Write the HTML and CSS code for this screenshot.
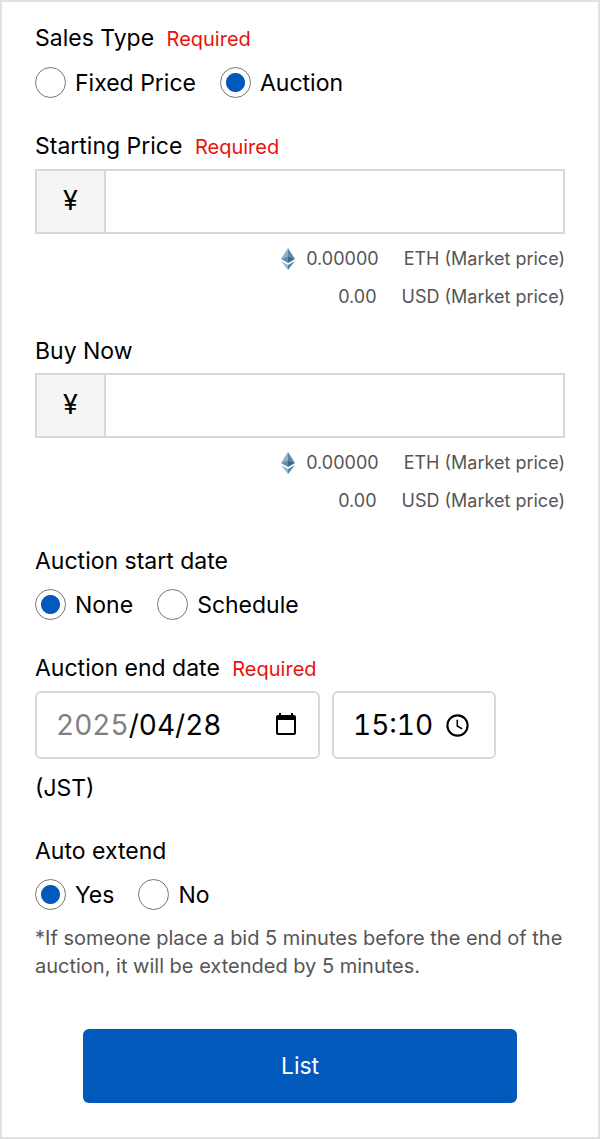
FILE: index.html
```html
<!DOCTYPE html>
<html lang="en">
  <head>
    <meta charset="utf-8" />
    <meta name="viewport" content="width=device-width, initial-scale=1.0" />
    <title>List Item</title>
    <link rel="stylesheet" href="styles.css">
  </head>
  <body>
    <svg class="sprite" aria-hidden="true">
      <symbol id="eth" viewBox="0 0 14 22">
        <path d="M7 0 L0 11 L7 8 Z" fill="#8fb0c6" />
        <path d="M7 0 L14 11 L7 8 Z" fill="#5c88a8" />
        <path d="M0 11 L7 8 V15 Z" fill="#5f8fb0" />
        <path d="M14 11 L7 8 V15 Z" fill="#38688a" />
        <path d="M0 13 L7 17 V22 Z" fill="#94b6cc" />
        <path d="M14 13 L7 17 V22 Z" fill="#5283a4" />
      </symbol>
    </svg>

    <form class="container">
      <fieldset class="section">
        <legend class="section-title">Sales Type <span class="required">Required</span></legend>
        <div class="options">
          <label class="option"><input type="radio" class="radio" name="sales-type">Fixed Price</label>
          <label class="option"><input type="radio" class="radio" name="sales-type" checked>Auction</label>
        </div>
      </fieldset>

      <div class="section section-price">
        <label class="section-title" for="starting-price">Starting Price <span class="required">Required</span></label>
        <div class="price-field">
          <span class="currency">¥</span>
          <input type="text" class="price-input" id="starting-price" inputmode="numeric">
        </div>
        <div class="rates">
          <div class="rate">
            <svg class="eth-icon" aria-hidden="true"><use href="#eth" /></svg>
            <span class="rate-value">0.00000</span>
            <span>ETH (Market price)</span>
          </div>
          <div class="rate">
            <span class="rate-value">0.00</span>
            <span>USD (Market price)</span>
          </div>
        </div>
      </div>

      <div class="section section-buy">
        <label class="section-title" for="buy-now">Buy Now</label>
        <div class="price-field">
          <span class="currency">¥</span>
          <input type="text" class="price-input" id="buy-now" inputmode="numeric">
        </div>
        <div class="rates">
          <div class="rate">
            <svg class="eth-icon" aria-hidden="true"><use href="#eth" /></svg>
            <span class="rate-value">0.00000</span>
            <span>ETH (Market price)</span>
          </div>
          <div class="rate">
            <span class="rate-value">0.00</span>
            <span>USD (Market price)</span>
          </div>
        </div>
      </div>

      <fieldset class="section">
        <legend class="section-title">Auction start date</legend>
        <div class="options">
          <label class="option"><input type="radio" class="radio" name="start-date" checked>None</label>
          <label class="option"><input type="radio" class="radio" name="start-date">Schedule</label>
        </div>
      </fieldset>

      <div class="section">
        <label class="section-title" for="end-date">Auction end date <span class="required">Required</span></label>
        <div class="date-row">
          <input type="date" class="date-input" id="end-date" value="2025-04-28">
          <div class="time-field">
            <input type="text" class="time-input" value="15:10" aria-label="Auction end time">
            <svg class="clock-icon" viewBox="0 0 24 24" aria-hidden="true">
              <circle cx="12" cy="12" r="9.7" />
              <path d="M11.8 6.5 V12.5 L16.5 15.2" />
            </svg>
          </div>
        </div>
        <div class="timezone">(JST)</div>
      </div>

      <fieldset class="section section-extend">
        <legend class="section-title">Auto extend</legend>
        <div class="options">
          <label class="option"><input type="radio" class="radio" name="extend" checked>Yes</label>
          <label class="option"><input type="radio" class="radio" name="extend">No</label>
        </div>
        <p class="note">*If someone place a bid 5 minutes before the end of the auction, it will be extended by 5 minutes.</p>
      </fieldset>

      <button type="submit" class="button">List</button>
    </form>
  </body>
</html>
```
FILE: styles.css
```css
* {
  box-sizing: border-box;
}

body {
  font-family: Inter, "Liberation Sans", sans-serif;
  font-size: 23px;
  line-height: 30px;
  color: #000000;
  background-color: #ffffff;
  margin: 0;
}

input,
button {
  font: inherit;
  color: inherit;
}

.sprite {
  display: none;
}

.container {
  display: flex;
  flex-direction: column;
  min-height: 100vh;
  padding: 21px 33px 33px;
  border: 2px solid #e2e2e2;
}

.section {
  min-width: 0;
  margin: 0 0 33px;
  padding: 0;
  border: none;
}

.section-price {
  margin-bottom: 20px;
}

.section-buy {
  margin-bottom: 26px;
}

.section-title {
  display: block;
  padding: 0;
}

.required {
  margin-left: 6px;
  font-size: 20px;
  color: #e8130c;
}

.options {
  display: flex;
  gap: 24px;
  margin-top: 13px;
}

.option {
  display: flex;
  align-items: center;
  gap: 9px;
}

.radio {
  appearance: none;
  width: 31px;
  height: 31px;
  margin: 0;
  border: 1px solid #777777;
  border-radius: 50%;
}

.radio:checked {
  background: radial-gradient(circle, #0059bb 9px, #ffffff 10px);
}

.price-field {
  display: flex;
  height: 65px;
  margin-top: 7px;
  border: 2px solid #d8d8d8;
}

.currency {
  display: flex;
  align-items: center;
  justify-content: center;
  width: 69px;
  padding-bottom: 2px;
  font-size: 27px;
  background-color: #f5f5f5;
  border-right: 2px solid #d8d8d8;
}

.price-input {
  flex: 1;
  min-width: 0;
  padding: 0 20px;
  border: none;
}

.rates {
  margin-top: 6px;
  font-size: 18px;
  line-height: 38px;
  color: #555555;
}

.rate {
  display: flex;
  align-items: center;
  justify-content: flex-end;
}

.rate-value {
  margin-right: 25px;
}

.eth-icon {
  width: 14px;
  height: 22px;
  margin-right: 11px;
}

.date-row {
  display: flex;
  gap: 12px;
  margin-top: 7px;
}

.date-input,
.time-field {
  height: 68px;
  padding: 0 19px;
  font-size: 28px;
  font-variant-numeric: tabular-nums;
  border: 2px solid #d8d8d8;
  border-radius: 6px;
}

.date-input {
  width: 285px;
}

/* year / month / day, the separators fall into the free columns */
.date-input::-webkit-datetime-edit-fields-wrapper {
  display: inline-grid;
  grid-template-columns: repeat(5, auto);
}

.date-input::-webkit-datetime-edit-year-field {
  grid-area: 1 / 1;
  padding: 0;
  color: #808080;
}

.date-input::-webkit-datetime-edit-month-field {
  grid-area: 1 / 3;
  padding: 0;
}

.date-input::-webkit-datetime-edit-day-field {
  grid-area: 1 / 5;
  padding: 0;
}

.date-input::-webkit-calendar-picker-indicator {
  width: 26px;
  height: 26px;
  padding: 0;
}

.time-field {
  display: flex;
  align-items: center;
  gap: 8px;
  width: 164px;
}

.time-input {
  width: 84px;
  padding: 0;
  border: none;
}

.clock-icon {
  width: 25px;
  height: 25px;
  fill: none;
  stroke: #000000;
  stroke-width: 2;
}

.clock-icon path {
  stroke-width: 1.5;
}

.timezone {
  margin-top: 14px;
}

.section-extend {
  margin-bottom: 49px;
}

.note {
  margin: 14px 0 0;
  font-size: 20px;
  line-height: 28px;
  color: #555555;
}

.button {
  height: 74px;
  margin: 0 48px;
  color: #ffffff;
  background-color: #0059bb;
  border: none;
  border-radius: 6px;
  cursor: pointer;
}
```
